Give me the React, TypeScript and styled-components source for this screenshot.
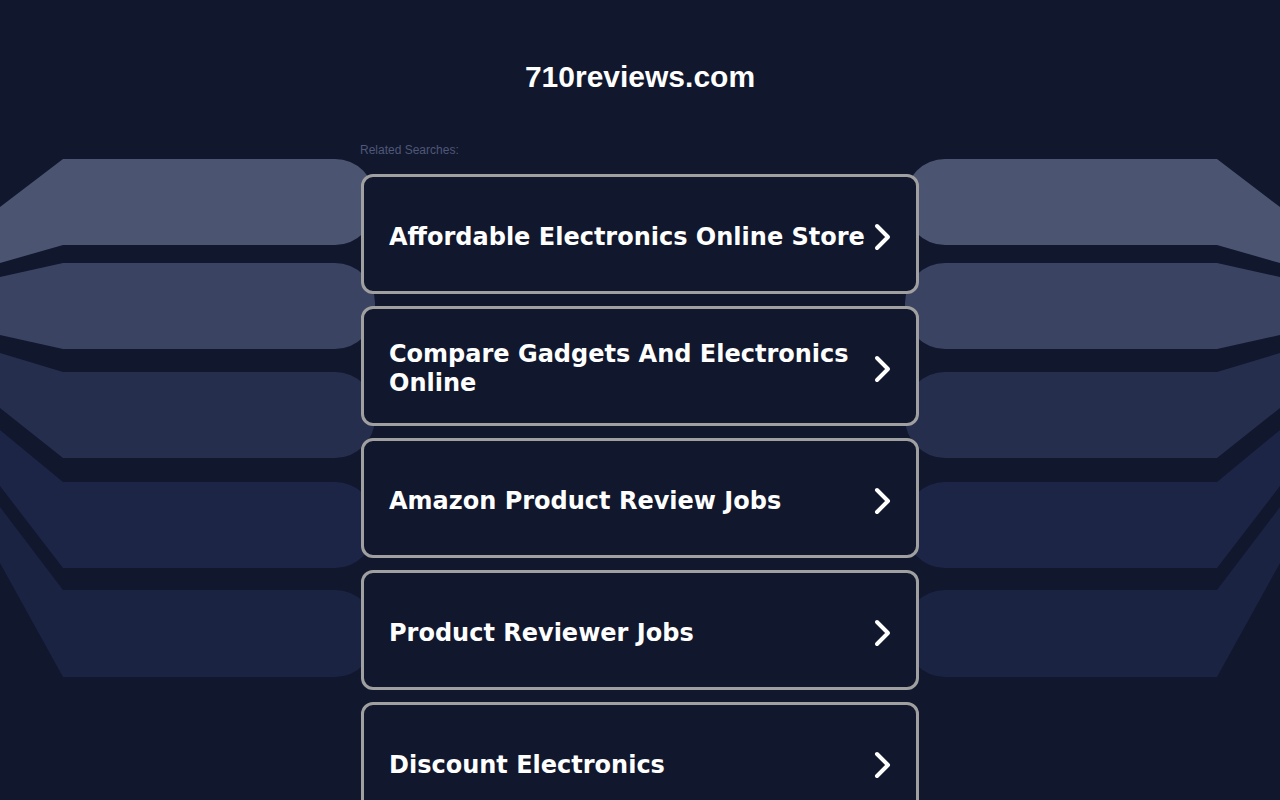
import styled, { createGlobalStyle } from "styled-components";

const GlobalStyle = createGlobalStyle`
    html, body {
        margin: 0;
        padding: 0;
        background: #11172d;
    }
    body {
        font-family: "Liberation Sans", Arial, sans-serif;
        overflow: hidden;
    }
`

type Band = { yt: number; yb: number; t0: number; b0: number; color: string }

// left side bands: y at the bend (x = 63) and at the page edge (x = 0)
const bands: Band[] = [
    { yt: 159, yb: 245, t0: 207, b0: 263, color: "#4b5572" },
    { yt: 263, yb: 349, t0: 277, b0: 335, color: "#3a4361" },
    { yt: 372, yb: 458, t0: 353, b0: 408, color: "#252e4c" },
    { yt: 482, yb: 568, t0: 430, b0: 486, color: "#1c2545" },
    { yt: 590, yb: 677, t0: 507, b0: 563, color: "#1a2342" },
]

const searches = [
    "Affordable Electronics Online Store",
    "Compare Gadgets And Electronics Online",
    "Amazon Product Review Jobs",
    "Product Reviewer Jobs",
    "Discount Electronics",
]

function bandPath(b: Band, mirror: boolean) {
    const r = 40
    const xr = 375
    const X = (x: number) => (mirror ? 1280 - x : x)
    const sweep = mirror ? 0 : 1
    return [
        `M${X(0)},${b.t0}`,
        `L${X(63)},${b.yt}`,
        `L${X(xr - r)},${b.yt}`,
        `A${r},${r} 0 0 ${sweep} ${X(xr)},${b.yt + r}`,
        `L${X(xr)},${b.yb - r}`,
        `A${r},${r} 0 0 ${sweep} ${X(xr - r)},${b.yb}`,
        `L${X(63)},${b.yb}`,
        `L${X(0)},${b.b0}`,
        "Z",
    ].join(" ")
}

function Backdrop() {
    return (
        <BackdropSvg viewBox="0 0 1280 800" width="1280" height="800">
            {bands.map((b, i) => (
                <g key={i} fill={b.color}>
                    <path d={bandPath(b, false)} />
                    <path d={bandPath(b, true)} />
                </g>
            ))}
        </BackdropSvg>
    )
}

function Chevron() {
    return (
        <ChevronSvg viewBox="0 0 20 28" width="20" height="28">
            <polyline points="4,3 15,14 4,25" fill="none" stroke="#fff" strokeWidth="4" strokeLinecap="round" strokeLinejoin="round" />
        </ChevronSvg>
    )
}

export default function App() {
    return (
        <Page>
            <GlobalStyle />
            <Backdrop />
            <Content>
                <Title>710reviews.com</Title>
                <Related>Related Searches:</Related>
                <List>
                    {searches.map((s) => (
                        <Card key={s} href="#">
                            <CardText>{s}</CardText>
                            <Chevron />
                        </Card>
                    ))}
                </List>
            </Content>
        </Page>
    )
}

const Page = styled.div`
    position: relative;
    width: 1280px;
    height: 800px;
    overflow: hidden;
    background: #11172d;
`

const BackdropSvg = styled.svg`
    position: absolute;
    top: 0;
    left: 0;
    display: block;
`

const Content = styled.div`
    position: relative;
    z-index: 1;
    width: 558px;
    margin: 0 auto;
    padding-top: 60px;
    display: flex;
    flex-direction: column;
`

const Title = styled.h1`
    margin: 0;
    text-align: center;
    color: #ffffff;
    font-family: "Liberation Sans", Arial, sans-serif;
    font-size: 30px;
    line-height: 34px;
    font-weight: bold;
`

const Related = styled.div`
    margin-top: 49px;
    margin-left: -1px;
    color: #4e5877;
    font-size: 12px;
    line-height: 14px;
`

const List = styled.div`
    margin-top: 17px;
    display: flex;
    flex-direction: column;
    gap: 12px;
`

const Card = styled.a`
    box-sizing: border-box;
    height: 120px;
    display: flex;
    align-items: center;
    padding: 6px 23px 0 25px;
    border: 3px solid #a0a0a0;
    border-radius: 12px;
    background: #11172d;
    text-decoration: none;
    color: #ffffff;
`

const CardText = styled.span`
    flex: 1;
    font-family: "DejaVu Sans", Verdana, sans-serif;
    font-weight: bold;
    font-size: 24px;
    line-height: 29px;
    color: #ffffff;
`

const ChevronSvg = styled.svg`
    flex: none;
    display: block;
`
